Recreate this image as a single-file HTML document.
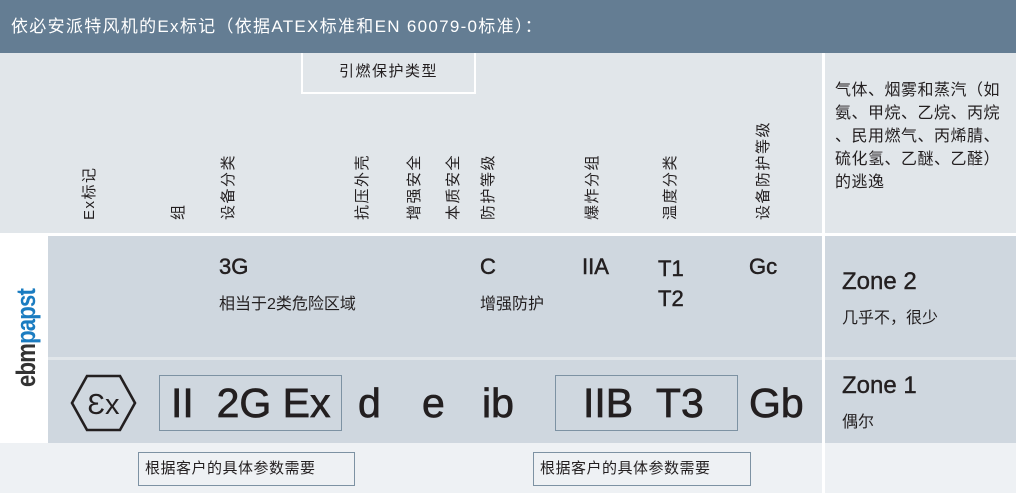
<!DOCTYPE html>
<html><head><meta charset="utf-8">
<style>
*{margin:0;padding:0;box-sizing:border-box}
body{width:1016px;height:493px;overflow:hidden;background:#e1e6ea;font-family:"Liberation Sans","Noto Sans CJK SC",sans-serif;color:#231f20;position:relative}
.a{position:absolute}
.hdr{left:0;top:0;width:1016px;height:53px;background:#647d93;color:#fff;font-size:17px;line-height:53px;padding-left:11px;letter-spacing:1.3px}
.v{position:absolute;transform-origin:0 0;transform:rotate(-90deg);font-size:15px;line-height:16px;white-space:nowrap;letter-spacing:1.5px}
.row{background:#cfd7df}
.box{position:absolute;border:1.5px solid #7d92a3}
.big{font-size:41px;line-height:41px;position:absolute;white-space:nowrap;-webkit-text-stroke:0.7px #231f20}
.m{font-size:22px;position:absolute;white-space:nowrap;-webkit-text-stroke:0.5px #231f20}
.s{font-size:16px;position:absolute;white-space:nowrap}
</style></head><body>
<div class="a hdr">依必安派特风机的Ex标记（依据ATEX标准和EN 60079-0标准）：</div>
<div class="a" style="left:301px;top:53px;width:175px;height:41px;border:2px solid #fff;border-top:none;font-size:15px;text-align:center;line-height:38px;letter-spacing:1.5px">引燃保护类型</div>
<div class="a" style="left:822px;top:53px;width:3px;height:440px;background:#fff"></div>

<div class="v" style="left:82px;top:220px">Ex标记</div>
<div class="v" style="left:171px;top:220px">组</div>
<div class="v" style="left:221px;top:220px">设备分类</div>
<div class="v" style="left:355px;top:220px">抗压外壳</div>
<div class="v" style="left:407px;top:220px">增强安全</div>
<div class="v" style="left:446px;top:220px">本质安全</div>
<div class="v" style="left:481px;top:220px">防护等级</div>
<div class="v" style="left:585px;top:220px">爆炸分组</div>
<div class="v" style="left:663px;top:220px">温度分类</div>
<div class="v" style="left:756px;top:220px">设备防护等级</div>

<div class="a" style="left:835px;top:79px;font-size:16px;line-height:23px;white-space:nowrap;letter-spacing:0.5px">气体、烟雾和蒸汽（如<br>氨、甲烷、乙烷、丙烷<br>、民用燃气、丙烯腈、<br>硫化氢、乙醚、乙醛）<br>的逃逸</div>

<div class="a" style="left:0;top:233px;width:1016px;height:3px;background:#fff"></div>
<div class="a" style="left:0;top:236px;width:48px;height:207px;background:#fff"></div>
<div class="a row" style="left:48px;top:236px;width:774px;height:121px"></div>
<div class="a row" style="left:825px;top:236px;width:191px;height:121px"></div>
<div class="a row" style="left:48px;top:360px;width:774px;height:83px"></div>
<div class="a row" style="left:825px;top:360px;width:191px;height:83px"></div>
<div class="a" style="left:0;top:443px;width:1016px;height:50px;background:#eef1f4"></div>
<div class="a" style="left:822px;top:443px;width:3px;height:50px;background:#fff"></div>

<div class="a" style="left:13px;top:387px;transform-origin:0 0;transform:rotate(-90deg) scaleX(0.82);font-weight:bold;font-size:27px;line-height:26px;white-space:nowrap;letter-spacing:-1px"><span style="color:#333">ebm</span><span style="color:#1a7cc1">papst</span></div>

<div class="m" style="left:219px;top:254px">3G</div>
<div class="s" style="left:219px;top:290px">相当于2类危险区域</div>
<div class="m" style="left:480px;top:254px">C</div>
<div class="s" style="left:480px;top:290px">增强防护</div>
<div class="m" style="left:582px;top:254px">IIA</div>
<div class="m" style="left:658px;top:254px;line-height:30px">T1<br>T2</div>
<div class="m" style="left:749px;top:254px">Gc</div>
<div class="a" style="left:842px;top:268px;font-size:24px;-webkit-text-stroke:0.4px #231f20">Zone 2</div>
<div class="s" style="left:842px;top:304px">几乎不，很少</div>

<svg class="a" style="left:68px;top:372px" width="72" height="62" viewBox="68 372 72 62">
<polygon points="72,403 87,376 120,376 135,403 120,430 87,430" fill="none" stroke="#231f20" stroke-width="2.6"/>
<text x="103.5" y="414" font-family="Liberation Sans,DejaVu Sans,sans-serif" font-size="29" text-anchor="middle" fill="#231f20">Ɛx</text>
</svg>
<div class="box" style="left:159px;top:375px;width:183px;height:56px"></div>
<div class="big" style="left:171px;top:383px">II&nbsp;&nbsp;2G Ex</div>
<div class="big" style="left:358px;top:383px">d</div>
<div class="big" style="left:422px;top:383px">e</div>
<div class="big" style="left:482px;top:383px">ib</div>
<div class="box" style="left:555px;top:375px;width:183px;height:56px"></div>
<div class="big" style="left:583px;top:383px">IIB&nbsp;&nbsp;T3</div>
<div class="big" style="left:749px;top:383px">Gb</div>
<div class="a" style="left:842px;top:372px;font-size:24px;-webkit-text-stroke:0.4px #231f20">Zone 1</div>
<div class="s" style="left:842px;top:408px">偶尔</div>

<div class="box" style="left:138px;top:452px;width:217px;height:34px;font-size:15px;line-height:31px;padding-left:6px;letter-spacing:0.5px">根据客户的具体参数需要</div>
<div class="box" style="left:533px;top:452px;width:218px;height:34px;font-size:15px;line-height:31px;padding-left:6px;letter-spacing:0.5px">根据客户的具体参数需要</div>
</body></html>
